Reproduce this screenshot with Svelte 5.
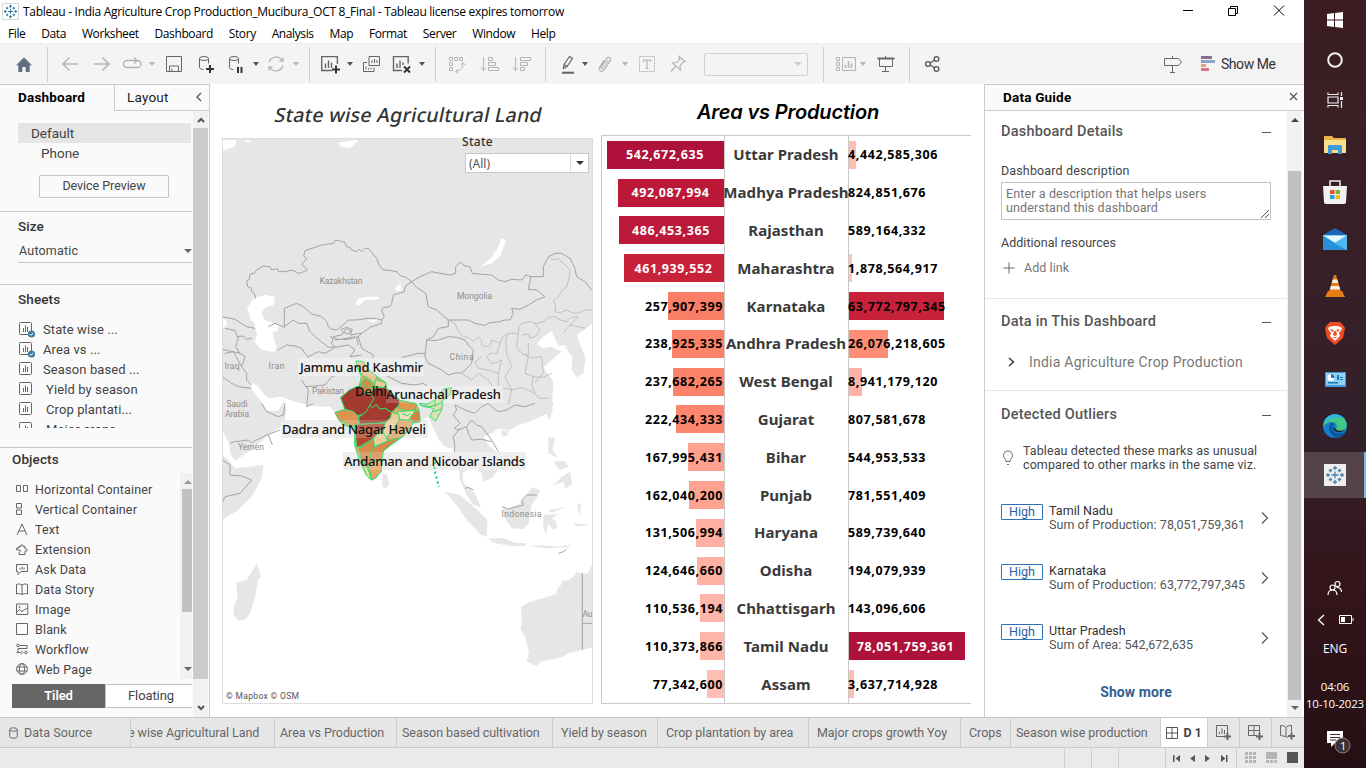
<script>
  const menus = ['File', 'Data', 'Worksheet', 'Dashboard', 'Story', 'Analysis', 'Map', 'Format', 'Server', 'Window', 'Help'];

  const db = '<path d="M3.5 4.5v9c0 1.2 2 2 4 2M12.500 4.500v5"/><ellipse cx="8" cy="4.500" rx="4.500" ry="2"/>';
  const icons = {
    home: '<path fill="#5f6f80" stroke="none" d="M10 3.500 18 11.200h-2.300V18h-4v-5H8.300v5h-4v-6.800H2z"/>',
    back: '<path stroke="#b4b4b4" stroke-width="1.500" d="M18 10H3M9.500 3.500 3 10l6.500 6.500"/>',
    forward: '<path stroke="#b4b4b4" stroke-width="1.500" d="M2 10h15M10.500 3.500 17 10l-6.500 6.500"/>',
    replay: '<path stroke="#b4b4b4" stroke-width="1.300" d="M10 13.500H5a3.500 3.500 0 0 1 0-7h10M12 3.500l3 3-3 3M15.500 6.500a3.500 3.500 0 0 1 0 7H10"/>',
    save: '<path d="M2.500 2.500h15v15h-15zM5.500 17v-5h9v5M8 17v-2.500"/>',
    dbplus: db + '<path stroke="#333" stroke-width="2" d="M14 11v8M10 15h8"/>',
    dbpause: db + '<path stroke="#333" stroke-width="2" d="M12 13v6M15.500 13v6"/>',
    refresh: '<path stroke="#b4b4b4" stroke-width="1.300" d="M3 8.500a7.500 7.500 0 0 1 13.500-2M17 11.500a7.500 7.500 0 0 1-13.500 2M13.500 7h3.500V3.500M6.500 13H3v3.500"/>',
    newsheet: '<path stroke-width="1.400" d="M11 16.500H.7V2.600h15.700V10M4.500 14V9.500M7.500 14V6.500M10.500 14V8.500"/><path stroke="#333" stroke-width="2" d="M15 11.500v8M11 15.500h8"/>',
    duplicate: '<path d="M8 2.500h10.500v9H8zM6 8.500H2.500v9H13v-4M11 9V6.500M13.500 9V5M16 9V6M5 15.500v-3M7.500 15.500v-1.500M10 15.500v-2"/>',
    clear: '<path stroke-width="1.400" d="M10 16.500H1.500V2.600h14.700v7M5 14V9.500M8 14V6.500M11 11V8.500"/><path stroke="#333" stroke-width="2" d="m12 12.500 6 6M18 12.500l-6 6"/>',
    swap: '<path stroke="#b4b4b4" d="M2.500 3.500h3v3h-3zM7.500 3.500h3v3h-3zM12.500 3.500h3v3h-3zM2.500 8.500h3v3h-3zM2.500 13.500h3v3h-3zM16 9c0 4-2 7.500-7 8.500M13.500 11 16 8.500l2.500 2.500M11 15l-2.500 2.500L11 19.500"/>',
    asc: '<path stroke="#b4b4b4" d="M3.500 3v13M1 13.500l2.500 3 2.500-3M8.500 3.500h4v3h-4zM8.500 8.500h7v3h-7zM8.500 13.500h10v3h-10z"/>',
    desc: '<path stroke="#b4b4b4" d="M3.500 3v13M1 13.500l2.500 3 2.500-3M8.500 3.500h10v3h-10zM8.500 8.500h7v3h-7zM8.500 13.500h4v3h-4z"/>',
    pen: '<path stroke-width="1.200" d="m6 10.500 5.500-8 3 2-5.500 8-3.500 2zM6 10.500l3 2"/><path stroke-width="2" d="M4 18.700h12"/>',
    clip: '<path stroke="#b4b4b4" stroke-width="1.200" d="m13.500 6-5.500 8c-1 1.300-2.600.2-1.800-1.200l5.600-8.400c1.600-2.300 5-.4 3.500 2.200l-6 9c-2.500 3.500-6.700 1-4.600-2.500l4.500-7"/>',
    text: '<path stroke="#b4b4b4" stroke-dasharray="2 1" d="M2.500 2.500h15v15h-15z"/><path stroke="#b4b4b4" stroke-width="1.200" d="M6.500 8V6h7v2M10 6v8.500M8.500 14.500h3"/>',
    pin: '<path stroke="#b4b4b4" stroke-width="1.200" d="m11 2.500 6 5-2 .5-3 4 .5 4-8-7 4.500-.5 2.500-3.500zM8 12l-5 5.500"/>',
    cards: '<path stroke="#b4b4b4" d="M.5 3.500h3v3h-3zM.5 8.500h3v3h-3zM.5 13.500h3v3h-3zM6.500 3.500h13v13h-13z"/><path stroke="#b4b4b4" stroke-width="1.600" d="M9.500 14v-3M12.500 14V7M15.500 14V9.500"/>',
    present: '<path d="M9.500 2v2M3.500 5v7.500h13V5M9.500 12.500v5M6 17.500h7"/><path stroke-width="2" d="M1.500 4.500h17"/>',
    share: '<g stroke="#555" stroke-width="1.300"><circle cx="6" cy="10" r="2.400"/><circle cx="14.500" cy="5" r="2.400"/><circle cx="14.500" cy="15" r="2.400"/><path d="m8 9 4.500-2.800M8 11l4.500 2.800"/></g>',
    sign: '<path d="M1.500 4.500h14l3 3.500-3 3.500h-14zM9.500 2v2.500M9.500 11.500v7M7 18.500h5"/>'
  };

  const tools = [
    ['home', 14], ['sep', 13], ['back', 12], ['forward', 12], ['replay', 10], ['caret-off', 6], ['save', 8], ['dbplus', 12],
    ['dbpause', 10], ['caret', 6], ['refresh', 6], ['caret-off', 6], ['sep', 9], ['newsheet', 11], ['caret', 5], ['duplicate', 7],
    ['clear', 11], ['caret', 6], ['sep', 9], ['swap', 11], ['asc', 13], ['desc', 12], ['sep', 13], ['pen', 12], ['caret', 3],
    ['clip', 6], ['caret-off', 6], ['text', 8], ['pin', 11], ['select', 16], ['sep', 15], ['cards', 12], ['caret-off', 3],
    ['present', 9], ['sep', 13], ['share', 12]
  ];

  const sheets = [
    ['State wise ...', true, false], ['Area vs ...', true, false], ['Season based ...', false, false],
    ['Yield by season', false, true], ['Crop plantati...', false, true], ['Major crops ...', false, true]
  ];

  const objects = [
    ['Horizontal Container', '<path d="M.5 2.500h4v6h-4zM7.500 2.500h4v6h-4z"/>'],
    ['Vertical Container', '<path d="M.5.500h5v4.500h-5zM.5 7h5v4.500h-5z"/>'],
    ['Text', '<path d="M1 12 6 1l5 11M3 8h6"/>'],
    ['Extension', '<path d="M3 3.500h2C4 1 8 1 7 3.500h2v2.500c3-1 3 3 0 2v3.500H3V9.500C5 9 5 6.500 3 7H.7V5H3z"/>'],
    ['Ask Data', '<path d="M.5 1.500h11v7H5l-3 3v-3H.5zM4 6.500V5M6 6.500V3.500M8 6.500V4.500"/>'],
    ['Data Story', '<path d="M.5 1.500c2-1 4-.5 5.500.5 1.500-1 3.500-1.500 5.500-.5v9.500c-2-.7-4-.5-5.500.5-1.500-1-3.500-1.200-5.500-.5zM6 2v9.500"/>'],
    ['Image', '<path d="M.5 1h11.300v10.500H.5zM1 9l2.500-2.500L6 8.500 8 7l3.500-2"/><circle cx="3.500" cy="4" r=".6"/>'],
    ['Blank', '<path d="M.5.500h11v11H.5z"/>'],
    ['Workflow', '<circle cx="2" cy="2.500" r="1.300"/><circle cx="10" cy="9.500" r="1.300"/><path d="M3.500 2.500h7.500v3H2v4h3M6 5.500h3M5 7.500l2 2-2 2M.5 9.500h2"/>'],
    ['Web Page', '<circle cx="6" cy="6" r="5.400"/><ellipse cx="6" cy="6" rx="2.600" ry="5.400"/><path d="M1 4h10M1 8h10"/>']
  ];

  const rows = [
    ['Uttar Pradesh', '542,672,635', '#ae123a', '4,442,585,306', '#ffbeb2'],
    ['Madhya Pradesh', '492,087,994', '#bc183a', '824,851,676', '#ffbeb2'],
    ['Rajasthan', '486,453,365', '#bd193a', '589,164,332', '#ffbeb2'],
    ['Maharashtra', '461,939,552', '#c8213a', '1,878,564,917', '#fcc5bd'],
    ['Karnataka', '257,907,399', '#fa7d66', '63,772,797,345', '#c8213a'],
    ['Andhra Pradesh', '238,925,335', '#fc826a', '26,076,218,605', '#fe8c76'],
    ['West Bengal', '237,682,265', '#fc826a', '8,941,179,120', '#ffb2a5'],
    ['Gujarat', '222,434,333', '#fd866e', '807,581,678', '#ffbeb2'],
    ['Bihar', '167,995,431', '#ffa18f', '544,953,533', '#ffbeb2'],
    ['Punjab', '162,040,200', '#ffa391', '781,551,409', '#ffbeb2'],
    ['Haryana', '131,506,994', '#ffb0a2', '589,739,640', '#ffbeb2'],
    ['Odisha', '124,646,660', '#ffb2a4', '194,079,939', '#ffbeb2'],
    ['Chhattisgarh', '110,536,194', '#ffb5a8', '143,096,606', '#ffbeb2'],
    ['Tamil Nadu', '110,373,866', '#ffb5a8', '78,051,759,361', '#ae123a'],
    ['Assam', '77,342,600', '#ffbeb2', '3,637,714,928', '#ffbeb2']
  ].map(([state, area, areaColor, prod, prodColor]) => {
    const a = +area.replaceAll(',', '');
    const p = +prod.replaceAll(',', '');
    return {
      state, area, areaColor, prod, prodColor,
      areaW: Math.round((a / 542672635) * 117),
      prodW: p < 1e9 ? 0 : Math.round((p / 78051759361) * 116),
      areaIn: a > 4e8, prodIn: p > 7e10
    };
  });

  const outliers = [
    ['Tamil Nadu', 'Sum of Production: 78,051,759,361'],
    ['Karnataka', 'Sum of Production: 63,772,797,345'],
    ['Uttar Pradesh', 'Sum of Area: 542,672,635']
  ];

  const tabs = [
    ['e wise Agricultural Land', 144, 0], ['Area vs Production', 122, 5], ['Season based cultivation', 156, 5], ['Yield by season', 105, 8],
    ['Crop plantation by area', 151, 8], ['Major crops growth Yoy', 152, 8], ['Crops', 50, 8], ['Season wise production', 150, 5]
  ];

  const land = [
    'M22 144H1133V700L1105 722 1085 735 1098 770 1112 805 1105 850 1085 862 1070 840 1072 800 1060 785 1050 765 1030 768 1010 722 985 740 965 762 985 775 1005 770 1040 785 1010 810 985 832 1015 875 1012 930 1015 945 1000 970 950 992 910 1005 880 1022 850 1015 830 1030 805 1040 820 1065 850 1090 858 1130 830 1165 805 1175 800 1150 780 1135 760 1140 742 1150 745 1180 780 1210 798 1252 775 1245 755 1215 735 1170 730 1120 715 1075 705 1075 690 1070 672 1050 650 1005 640 980 620 990 600 1000 560 1040 520 1065 500 1090 500 1140 470 1168 450 1130 430 1080 415 1020 400 1010 370 1000 360 970 345 950 290 948 240 935 200 920 165 925 150 915 125 885 105 878 112 900 135 930 145 945 155 962 190 962 205 935 215 960 208 1000 190 1015 160 1035 110 1080 60 1112 46 1090 42 1060 22 1020Z',
    'M22 1095 40 1110 60 1135 146 1125 140 1165 110 1220 70 1260 22 1290Z',
    'M125 1420 138 1460 130 1468 120 1520 105 1570 92 1588 70 1592 55 1575 58 1545 67 1525 64 1478 95 1470Z',
    'M1133 1422 1116 1452 1085 1446 1080 1455 1062 1470 1040 1472 1040 1482 1025 1500 1025 1510 1000 1520 945 1535 918 1550 920 1600 916 1615 930 1640 942 1685 935 1715 965 1728 975 1715 1040 1702 1060 1690 1133 1672Z',
    'M690 1205 735 1215 790 1262 817 1290 815 1340 795 1332 755 1290 725 1245Z',
    'M820 1345 865 1345 900 1358 935 1360 930 1368 885 1368 835 1358Z',
    'M862 1250 880 1258 915 1240 935 1215 950 1192 975 1200 968 1220 950 1245 942 1300 925 1318 890 1315 870 1285Z',
    'M985 1275 1030 1272 1010 1285 1020 1292 1028 1310 1015 1320 1000 1300 993 1335 985 1310Z',
    'M1000 1040 1020 1045 1012 1080 1030 1105 1000 1090Z', 'M1015 1115 1050 1112 1060 1130 1035 1140Z', 'M1040 1160 1065 1145 1072 1180 1052 1196 1045 1175 1015 1185Z',
    'M503 1152 515 1152 523 1180 515 1194 502 1190Z', 'M857 1023 880 1022 876 1037 862 1040Z', 'M1003 952 1014 957 1004 992 995 972Z',
    'M940 1368 985 1366 1030 1370 1070 1364 1060 1372 1000 1375Z', 'M1000 1260 1055 1250 1010 1268Z', 'M1085 1245 1100 1240 1094 1275ZM1075 1300 1125 1305 1085 1310Z'
  ];
  const water = [
    'M118 625 150 614 180 620 176 645 152 652 140 668 148 690 165 696 192 705 188 722 174 728 176 745 186 772 178 786 140 780 118 755 126 735 118 700 108 690 96 655 108 635Z',
    'M22 683 34 692 36 706 22 712ZM22 150 65 150 60 170 22 182ZM370 158 420 150 430 152 405 175 375 170ZM860 444 873 450 858 495 830 520 795 530 825 508 845 480Z',
    'M422 643 428 626 460 620 493 620 490 628 450 629 432 648ZM540 595 556 580 560 602 545 603ZM452 692 490 688 478 698ZM85 150 108 152 100 158Z'
  ];
  const borders = [
    'M122 626 118 610 110 605 108 593 98 590 95 572 103 568 105 552 118 550 125 540 145 528 165 530 168 540 188 536 190 545 210 545 225 541 240 543 247 550 260 548 277 540 260 522 268 515 275 505 266 498 270 482 300 472 320 465 355 460 358 453 372 450 378 456 388 455 395 470 405 472 410 480 425 485 432 478 440 485 450 475 460 475 485 505 492 525 505 540 525 541 545 545 560 560 570 560 590 575 570 590 568 605 545 612 535 615 530 640 525 650 505 652 500 660 508 680 500 690 480 685 460 685 425 690 400 690 385 705 365 720 350 718 340 710 335 695 320 680 290 672 265 650 245 640 208 655 208 710 235 690 250 700 275 700 285 725 300 740 340 772 360 770 350 760 355 740 380 735 395 715 410 725 405 735 440 730 465 712 500 700 500 690',
    'M590 575 615 560 650 545 665 548 705 555 722 550 722 530 735 517 750 528 765 530 772 550 800 553 830 555 850 570 870 575 890 568 920 570 932 555 948 560 985 560 985 530 1000 500 1020 490 1040 490 1065 505 1078 530 1085 560 1110 575 1130 600',
    'M590 575 605 592 632 610 640 650 665 660 700 690 730 690 760 690 780 700 808 706 825 698 855 695 870 690 885 690 895 670 890 655 915 658 940 645 965 630 990 620 965 600 940 598 948 560',
    'M22 680 60 688 95 710 120 715M30 715 60 722 70 745 62 770 75 790 22 778M75 790 90 800 80 830 95 850 95 870 110 885M22 860 50 880 70 890 108 895M65 740 85 738 95 748 110 745M190 780 215 765 240 768 260 775 270 790 280 800 270 815 260 830M280 800 310 785 330 790 360 772 400 765 420 780 405 800 440 795M260 870 280 900 275 950 295 940M270 890 300 888 330 885 350 860 380 850 400 830M345 740 370 748 400 748 430 740 440 775 475 795 470 820 500 850 530 865 560 880 600 885 625 880',
    'M440 730 425 745 430 765M160 710 180 700 208 712M375 720 395 712 412 718 400 732 380 725M358 750 380 748 420 740M45 1060 60 1055 100 1050 110 1058 125 1050 155 1035 195 1020M160 1035 172 1065M140 940 155 965 190 980 205 975 210 940M22 1110 45 1125 45 1155 80 1158 110 1170 75 1210 30 1220 22 1240M1102 1450V1680M1102 1600H1133M30 790 55 785 80 830',
    'M635 750 665 752 700 740 725 742 750 750 760 765 775 780 770 820 740 850 725 848 700 855 680 840 660 830 640 820 630 800 635 750 655 740 670 715 700 710 700 690M630 790 610 790 590 795 560 802',
    'M625 880 645 895 660 895 690 905 700 918 720 930 760 930 750 905M720 945 750 960 780 970 800 950 820 940 835 955 850 965 875 960 900 945 930 950 960 940M720 945 725 960 715 975 735 1000 718 1015 730 1020 755 1010 770 990 785 1005 800 1010 815 1030 830 1050 850 1085M715 1100 720 1070 715 1040 735 1015M755 1010 760 1030 770 1050 800 1048 830 1055M862 1250 880 1257 925 1245 920 1230 935 1215 965 1215M750 1195 760 1192 775 1200M1030 1390 1045 1385 1055 1378'
  ];
  const provinces = [
    'M700 690 720 700 728 720 745 740 760 742 775 755 790 740 800 752 800 765 810 770 825 768 830 750 855 760 862 742 880 730 910 730 912 712 920 700 945 695 965 700 985 695 1000 682 1020 680 1035 690 1055 695 1070 682 1090 680M1000 500 1015 510 1030 505 1045 520 1065 540 1062 565 1055 590 1040 605 1030 620 1015 630 1022 648 1020 665 1035 668 1055 660 1070 668 1090 670 1110 660 1130 660M855 760 845 790 825 790 815 800 830 820 845 818 860 810 850 850 820 840M880 730 872 750 875 790 890 830 870 860 890 900 880 945M910 730 905 770 920 790 940 800 930 850 955 860 950 885 960 910M920 735 940 732 945 745 960 740 975 720 960 700M930 790 950 805 980 800 985 850 970 865 960 880M740 850 770 870 790 850 820 870 840 900 820 912 800 910M820 840 790 835 780 815 800 800M955 860 985 862 1010 850M890 900 920 892 950 905 975 925 1000 925M850 850 850 890 890 900M940 760 940 795M1090 680 1060 710 1045 730M1065 705 1110 715'
  ];

  const outline = 'M108 48 130 50 150 78 172 95 197 113 200 128 232 158 240 166 288 176 298 198 300 230 280 234 260 262 248 275 215 298 190 318 186 345 184 378 166 400 155 405 140 392 118 345 104 300 104 245 88 246 70 240 45 203 75 193 62 158 88 135 118 122 124 95 112 68Z';
  const regions = [
    ['M62 158 88 135 118 122 130 142 148 146 163 160 164 178 140 198 130 208 112 212 100 200 75 193Z', '#a33a30'],
    ['M148 146 165 128 195 127 240 166 236 182 215 202 196 190 180 192 168 178 158 188 150 180 163 160Z', '#9d342e'],
    ['M116 215 130 208 140 198 150 180 158 188 168 178 180 192 196 190 215 203 212 218 196 232 160 236 118 238Z', '#a43c31'],
    ['M45 203 75 193 100 200 116 215 112 240 88 246 80 232 60 230Z', '#de934f'],
    ['M104 243 118 238 160 236 196 234 196 250 175 262 160 280 120 305 110 306Z', '#b4482f'],
    ['M108 48 130 50 150 78 172 95 165 117 145 100 128 92 112 65Z', '#ecc391'],
    ['M165 103 197 113 196 128 165 124Z', '#efc999'], ['M120 120 134 100 150 108 165 128 148 146 130 142Z', '#d08d4f'],
    ['M240 166 288 176 286 194 262 198 236 190Z', '#e19650'], ['M232 200 262 198 287 196 272 216 265 226 240 224Z', '#eee0b8'],
    ['M272 216 287 196 298 200 300 230 280 234Z', '#d28448'], ['M215 203 236 206 238 224 222 250 198 278 190 262 196 234 212 218Z', '#efcc94'],
    ['M238 224 265 226 280 232 260 262 248 275 215 290 200 280 222 250Z', '#e3a260'], ['M160 282 178 264 190 264 204 288 163 306Z', '#efcf98'],
    ['M163 306 204 288 248 275 215 298 190 318 186 344 158 350 150 330Z', '#d88b4b'], ['M118 310 160 282 163 306 150 330 158 350 145 362 124 350Z', '#d88b4b'],
    ['M124 350 145 375 155 405 140 392Z', '#efdc9c'], ['M145 362 158 350 186 344 184 378 166 400 155 404Z', '#e5a766'],
    ['M298 174 320 178 345 165 370 132 395 128 390 150 368 165 365 195 347 228 330 215 342 190 308 184Z', '#dce0b0']
  ];

  const places = [
    ['Kazakhstan', 341, 284, 43], ['Mongolia', 474.5, 299, 35], ['China', 461.500, 360, 24], ['Iraq', 232, 369, 15], ['Iran', 276.5, 369, 16], ['Pakistan', 328, 394, 32],
    ['Saudi', 237, 407, 21], ['Arabia', 237, 417, 24], ['Yemen', 251, 450, 26], ['Indonesia', 521.5, 517, 40], ['Au', 587.5, 617, 10]
  ];
  const plates = [[298, 358, 126, 18], [386, 386, 117, 17], [281, 420, 147, 18], [343, 452, 183, 18]];
  const marks = [
    ['Jammu and Kashmir', 300, 372, 123], ['Delhi', 355, 396, 32], ['Arunachal Pradesh', 386, 399, 115],
    ['Dadra and Nagar Haveli', 282, 434, 144], ['Andaman and Nicobar Islands', 344, 466, 181]
  ];
</script>

{#snippet logo(size, color)}
  <svg width={size} height={size} viewBox="0 0 20 20" fill="none" stroke={color} stroke-width="1.300">
    <path d="M10 6.500v7M6.500 10h7M10 1v4M8 3h4M10 15v4M8 17h4M3 8v4M1 10h4M17 8v4M15 10h4M5.500 3.800v3.400M3.800 5.500h3.400M14.500 3.800v3.400M12.800 5.500h3.400M5.500 12.800v3.400M3.800 14.500h3.400M14.500 12.800v3.400M12.800 14.500h3.400" />
  </svg>
{/snippet}

{#snippet sheetIcon(done)}
  <svg width="17" height="17" viewBox="0 0 17 17" fill="none" stroke="#666">
    <rect x=".5" y="1.500" width="12" height="12" rx="1" /><path d="M4.500 11V7M6.500 11V4.500M8.500 11V6" />
    {#if done}<circle cx="12.500" cy="13" r="3.600" fill="#3a7f9e" stroke="none" /><path stroke="#fff" d="m10.800 13 1.300 1.300 2.200-2.400" />{/if}
  </svg>
{/snippet}

<div class="screen">
  <main class="window">
    <header class="title">
      <span class="app-logo">{@render logo(15, '#2f7296')}</span>
      <span class="caption">Tableau - India Agriculture Crop Production_Mucibura_OCT 8_Final - Tableau license expires tomorrow</span>
      <svg class="winctl" width="104" height="14" viewBox="0 0 104 14" fill="none" stroke="#000">
        <path d="M1 6.500h10M46.500 4.500h7v7h-7zM48.500 4V2.500h7v7H54M92 1.500l10 10M102 1.500l-10 10" />
      </svg>
    </header>
    <nav class="menu">{#each menus as m}<span>{m}</span>{/each}</nav>

    <div class="toolbar">
      {#each tools as [name, gap]}
        <span class="tool {name}" style:margin-left="{gap}px">
          {#if icons[name]}<svg width="20" height="20" viewBox="0 0 20 20" fill="none" stroke="#666">{@html icons[name]}</svg>{/if}
        </span>
      {/each}
      <div class="showme">
        <svg width="20" height="20" viewBox="0 0 20 20" fill="none" stroke="#666">{@html icons.sign}</svg>
        <svg class="bars" width="14" height="16"><path fill="#86708f" d="M0 0h11v3H0z" /><path fill="#8aa5c4" d="M0 4h14v3H0z" /><path fill="#eba07c" d="M0 8h5v3H0z" /><path fill="#e2707d" d="M0 12h8v3H0z" /></svg>
        <span>Show Me</span>
      </div>
    </div>

    <div class="body">
      <aside class="left">
        <div class="ltabs"><b>Dashboard</b><div class="layout"><span>Layout</span><svg width="6" height="10" fill="none" stroke="#555" stroke-width="1.300"><path d="M5 1 1 5l4 4" /></svg></div></div>
        <div class="lwrap">
          <div class="lcontent">
            <section class="device">
              <div class="default">Default</div>
              <div class="phone">Phone</div>
              <div class="preview">Device Preview</div>
            </section>
            <section class="size"><h4>Size</h4><div class="auto"><span>Automatic</span><i class="tri"></i></div></section>
            <section class="sheets"><h4>Sheets</h4>
              <div class="slist">{#each sheets as [name, done, pad]}<div class="srow" class:pad>{@render sheetIcon(done)}<span>{name}</span></div>{/each}</div>
            </section>
            <section class="objects"><h4>Objects</h4>
              <div class="obox">
                <div class="olist">{#each objects as [name, art]}<div class="orow"><svg width="13" height="13" viewBox="0 0 13 13" fill="none" stroke="#666">{@html art}</svg><span>{name}</span></div>{/each}</div>
                <div class="oscroll"><i class="up"></i><div></div><i class="tri"></i></div>
              </div>
              <div class="mode"><b>Tiled</b><span>Floating</span></div>
            </section>
          </div>
          <div class="lscroll"><svg width="8" height="6" fill="none" stroke="#555" stroke-width="2"><path d="M1 5l3-3 3 3" /></svg><div></div><svg width="8" height="6" fill="none" stroke="#555" stroke-width="2"><path d="M1 1l3 3 3-3" /></svg></div>
        </div>
      </aside>

      <section class="mapcard">
        <h2><span>State wise Agricultural Land</span></h2>
        <div class="map">
          <svg width="369" height="564" viewBox="223 139 369 564">
            <g transform="translate(215 90) scale(.33333)">
              {#each land as d}<path {d} fill="#e6e6e6" />{/each}
              {#each water as d}<path {d} fill="#fff" />{/each}
              <g fill="none" stroke-linejoin="round"><g stroke="#a3a3a3" stroke-width="3">{#each borders as d}<path {d} />{/each}</g>
                <g stroke="#b8b8b8" stroke-width="2.500">{#each provinces as d}<path {d} />{/each}</g></g>
            </g>
            <g class="places">{#each places as [t, x, y, w]}<text {x} {y} textLength={w}>{t}</text>{/each}</g>
            {#each plates as [x, y, width, height]}<rect {x} {y} {width} {height} fill="#eee" />{/each}
            <g transform="translate(320 345) scale(.33333)" stroke="#2fdc6e" stroke-width="3" stroke-linejoin="round">
              <path d={outline} fill="#e3a862" />
              {#each regions as [d, c]}<path {d} fill={c} />{/each}
              <path fill="none" d="M300 180 325 185 350 180 370 168M345 165 345 185M340 200 365 192M130 120 150 128 165 128M245 206 262 212 272 206" />
              <path fill="none" stroke="#14d98a" stroke-dasharray="7 8" stroke-width="6" d="M346 335 343 375 357 425" />
            </g>
            {#each plates as [x, y, width, height]}<rect {x} {y} {width} {height} fill="#eee" fill-opacity=".2" />{/each}
            {#each marks as [t, x, y, w]}<text class="mark" {x} {y} textLength={w}>{t}</text>{/each}
            <text class="credit" x="226" y="699" textLength="73">© Mapbox © OSM</text>
          </svg>
          <div class="filter"><span>State</span><div class="combo"><span>(All)</span><i><em class="tri dark"></em></i></div></div>
        </div>
      </section>

      <section class="chartcard">
        <h2>Area vs Production</h2>
        <div class="chart">
          {#each rows as r}
            <div class="row">
              <div class="area" class:inside={r.areaIn}><div class="bar" style:width="{r.areaW}px" style:background={r.areaColor}><span>{r.area}</span></div></div>
              <div class="state">{r.state}</div>
              <div class="prod" class:inside={r.prodIn}><div class="bar" style:width="{r.prodW}px" style:background={r.prodColor}><span>{r.prod}</span></div></div>
            </div>
          {/each}
        </div>
      </section>

      <aside class="guide">
        <div class="ghead"><b>Data Guide</b><svg width="9" height="9" fill="none" stroke="#555" stroke-width="1.200"><path d="m1 1 7 7M8 1 1 8" /></svg></div>
        <div class="gwrap">
          <div class="gbody">
            <section class="details">
              <h3>Dashboard Details<i></i></h3>
              <div class="lab">Dashboard description</div>
              <div class="area-input">Enter a description that helps users<br />understand this dashboard<svg width="9" height="9" fill="none" stroke="#555"><path d="M1 9l8-8M5 9l4-4" /></svg></div>
              <div class="lab res">Additional resources</div>
              <div class="add"><svg width="12" height="12" stroke="#666" fill="none"><path d="M6 .5v11M.5 6h11" /></svg><span>Add link</span></div>
            </section>
            <section class="source">
              <h3>Data in This Dashboard<i></i></h3>
              <div class="ds"><svg width="7" height="10" fill="none" stroke="#333" stroke-width="1.400"><path d="m1 1 4.500 4L1 9" /></svg><span>India Agriculture Crop Production</span></div>
            </section>
            <section class="outliers">
              <h3>Detected Outliers<i></i></h3>
              <div class="tip"><svg width="12" height="16" fill="none" stroke="#666"><path d="M4 11.500C4 9 1.500 8.500 1.500 5.500a4.500 4.500 0 0 1 9 0c0 3-2.500 3.500-2.500 6zM5 14.500h2" /></svg><p>Tableau detected these marks as unusual<br />compared to other marks in the same viz.</p></div>
              {#each outliers as [n, d]}
                <div class="out"><span class="high">High</span><div><div class="n">{n}</div><div class="d">{d}</div></div><svg width="8" height="14" fill="none" stroke="#555" stroke-width="1.200"><path d="m1 1.500 5.500 5.500L1 12.500" /></svg></div>
              {/each}
              <b class="more">Show more</b>
            </section>
          </div>
          <div class="gscroll"><i class="up dark"></i><div></div><i class="tri"></i></div>
        </div>
      </aside>
    </div>

    <div class="tabs">
      <div class="src"><svg width="9" height="12" fill="none" stroke="#666"><ellipse cx="4.500" cy="2.500" rx="3.800" ry="1.700" /><path d="M.7 2.500v7c0 2.300 7.600 2.300 7.600 0v-7" /></svg><span>Data Source</span></div>
      {#each tabs as [t, w, p]}<div class="tab" class:cut={p === 0} style:width="{w}px" style:padding-left="{p}px"><span>{t}</span></div>{/each}
      <div class="tab active"><svg width="12" height="12" fill="none" stroke="#555"><path d="M.5.500h11v11H.5zM6 .5v11M.5 6h11" /></svg><b>D 1</b></div>
      <div class="tab new"><svg width="16" height="16" fill="none" stroke="#666"><path d="M9 11.500H.5V.5h11V8M3.500 9V7M6 9V3.500M8.500 9V5" /><path stroke-width="2" d="M11.500 8v7M8 11.500h7" /></svg></div>
      <div class="tab new"><svg width="16" height="16" fill="none" stroke="#666"><path d="M9 10.500H.5V.5h11V8M6 .5v10M.5 5.500h11" /><path stroke-width="2" d="M11.500 8v7M8 11.500h7" /></svg></div>
      <div class="tab new"><svg width="16" height="16" fill="none" stroke="#666"><path d="M8 12.500 6 11.500.5 10.500V.5C3 .5 5 1 6 2.500 7 1 9 .5 11.500.5V7M6 2.500v9" /><path stroke-width="2" d="M11.500 7.500v7M8 11h7" /></svg></div>
    </div>
    <footer class="status">
      <span></span><span></span><span></span>
      <div class="pager"><svg width="56" height="9" fill="#555"><path d="M0 1h1.500v7H0zM7 1v7L2.500 4.500zM22 1v7l-5-3.500zM32 1v7l5-3.500zM48 1v7l4.500-3.500zM53 1h1.500v7H53z" /></svg></div>
      <svg class="views" width="54" height="12"><path fill="#b5b5b5" d="M0 0h3v3H0zM4 0h3v3H4zM8 0h3v3H8zM0 4h3v3H0zM4 4h3v3H4zM8 4h3v3H8zM0 8h3v3H0zM4 8h3v3H4zM8 8h3v3H8zM21 0h11v7H21zM21 8h3v3h-3zM25 8h3v3h-3zM29 8h3v3h-3z" /><path fill="#555" d="M42 0h11v11H42z" /></svg>
    </footer>
  </main>

  <aside class="taskbar">
    <div class="tb"><svg width="16" height="16" fill="#fff"><path d="M0 2l7-1v6.500H0zM8 .9 16 0v7.500H8zM0 8.500h7V15l-7-1zM8 8.500h8V16l-8-1z" /></svg></div>
    <div class="tb"><svg width="16" height="16" fill="none" stroke="#eee" stroke-width="2"><circle cx="8" cy="8" r="6.800" /></svg></div>
    <div class="tb"><svg width="17" height="16" fill="none" stroke="#eee" stroke-width="1.200"><path d="M1 .5v2h10v-2M1 15.500v-2h10v2M1 5h10v6H1zM14.500 0v4M14.500 9v7" /><path stroke-width="3" d="M13 6.500h3" /></svg></div>
    <div class="tb"><svg width="22" height="18"><path fill="#e9b548" d="M0 0h8l2 2h12v12H0z" /><path fill="#fbe08a" d="M0 4h22v13H0z" /><path fill="#3f9bd8" d="M4 10q0-1 1-1h12q1 0 1 1v8h-4v-4H8v4H4z" /></svg></div>
    <div class="tb"><svg width="24" height="24"><path fill="none" stroke="#eee" stroke-width="1.500" d="M7 6V1h10v5" /><path fill="#f2f2f2" d="M0 6h24l-1 16q0 2-2 2H3q-2 0-2-2z" /><path fill="#e8502c" d="M7 10h4.500v4H7z" /><path fill="#7db52c" d="M12.500 10H17v4h-4.500z" /><path fill="#24a0e0" d="M7 15h4.500v4H7z" /><path fill="#f7b616" d="M12.500 15H17v4h-4.500z" /></svg></div>
    <div class="tb"><svg width="24" height="22"><path fill="#1765b5" d="M0 7 12 0l12 7v4H0z" /><path fill="#7fd3f7" d="M0 7h24v15H0z" /><path fill="#e7f6ff" d="M2 8h20L12 15z" /><path fill="#2791dc" d="M0 8l24 14H0z" /><path fill="#4cb9f0" d="M24 8v14L11 15z" /></svg></div>
    <div class="tb"><svg width="20" height="24"><path fill="#e67c12" d="M3 17h14l3 6H0zM9 1h2l5 17H4z" /><path fill="#f3eee8" d="M7.700 5.500h4.600l1 3.500H6.700zM5.800 12h8.400l1 3.500H4.800z" /></svg></div>
    <div class="tb"><svg width="20" height="24"><path fill="#f04b23" d="M5 1h10l3 3 2 3-2 10-8 7-8-7L0 7l2-3z" /><path fill="#fff" d="m4 6 4-1h4l4 1 1 2-3 4 1 3-5 5-5-5 1-3-3-4z" /><path fill="#f04b23" d="m5 8 4 1-2 2zM15 8l-4 1 2 2zM9 10h2l1 4-2 1-2-1zM7 16h6l-3 1z" /></svg></div>
    <div class="tb"><svg width="21" height="15"><path fill="#3e9bd9" d="M0 0h21v15H0z" /><path fill="#8fd0f5" d="M1 1h19v12H1z" /><circle cx="6" cy="5.500" r="3.500" fill="#fff" /><path fill="#1976b8" d="M6 2v4h3.500A3.500 3.500 0 0 0 6 2zM12 3h2v5h-2zM15 5h3v1h-3zM15 7h3v1h-3zM3 10h10v1.500H3z" /></svg></div>
    <div class="tb"><svg width="24" height="24"><circle cx="12" cy="12" r="12" fill="#137fcf" /><path fill="#43c881" d="M1 8C5-2 20-2 23.500 9c1 5-2 8-6 8-3 0-5-1-4-3 1-3-1-6-5-6C5 8 2 10 0 13z" /><path fill="#2db9df" d="M1 8C5-2 18-1 22 6 16 2 8 3 3 8z" /><path fill="#0d5499" d="M8 9c-4 5-1 12 5 15 4 0 7-2 9-6-6 3-13 1-13-4 0-2 0-3 3-4-1-1-2-1-4-1z" /><path fill="#2c2028" d="M11 12c0 4 5 6 11 4-3 3-10 3-12-1z" /></svg></div>
    <div class="tb on"><span>{@render logo(20, '#4b83a8')}</span></div>
    <div class="people"><svg width="16" height="16" fill="none" stroke="#fff" stroke-width="1.200"><circle cx="10.500" cy="4" r="2.500" /><circle cx="5.500" cy="7.500" r="2.500" /><path d="M1 15q0-5 4.500-5t4.500 5M9.500 7.500q5 0 5 4.500" /></svg></div>
    <div class="tray"><svg width="8" height="12" fill="none" stroke="#fff" stroke-width="1.300"><path d="M7 1 1.500 6 7 11" /></svg><svg width="16" height="9" fill="none" stroke="#fff"><path d="M.5.500h12v8H.5zM14 3v3" /><path fill="#fff" stroke="none" d="M2 2h4v5H2z" /></svg></div>
    <div class="eng">ENG</div>
    <div class="clock"><span>04:06</span><span>10-10-2023</span></div>
    <div class="note"><svg width="24" height="24"><path fill="#fff" d="M0 1h16v12H8l-4 4v-4H0z" /><path stroke="#42272c" d="M3 4.500h10M3 7.500h10M3 10h6" /><circle cx="15.500" cy="15.500" r="7.500" fill="#3a3435" stroke="#8b8586" /><text x="13" y="19.500" fill="#fff" font-size="11">1</text></svg></div>
  </aside>
</div>

<style>
  :global(body) { margin: 0; overflow: hidden; }
  .screen { width: 1366px; height: 768px; display: grid; grid-template-columns: 1304px 62px; overflow: hidden; background: #fff; color: #444; font: 12.500px Roboto, sans-serif; letter-spacing: .2px; }
  .screen * { box-sizing: border-box; }
  svg { display: block; flex: none; }
  h2, h3, h4, p { margin: 0; }
  .window { display: grid; grid-template-rows: 23px 20px 41px 633px 31px 20px; min-width: 0; }
  .title { display: flex; align-items: center; padding-left: 2px; color: #000; font-family: "Open Sans", sans-serif; font-size: 12px; letter-spacing: -.29px; white-space: nowrap; }
  .app-logo { width: 17px; height: 17px; border: 1px solid #d8d8d8; display: grid; place-items: center; }
  .caption { margin-left: 4px; }
  .winctl { margin-left: auto; margin-right: 18px; margin-bottom: 2px; }
  .menu { display: flex; align-items: center; gap: 15.900px; padding-left: 8px; color: #000; font-family: "Open Sans", sans-serif; font-size: 12px; letter-spacing: -.4px; }
  .toolbar { display: flex; align-items: center; background: #f4f4f4; border-top: 1px solid #ececec; }
  .tool { flex: none; width: 20px; }
  .tool.sep { width: 1px; height: 35px; background: #cfcfcf; }
  .tool.caret, .tool.caret-off { width: 8px; display: grid; place-items: center; }
  .tool.caret::after, .tool.caret-off::after, .tool.select::after { content: ""; border: 3px solid transparent; border-top: 4px solid #555; border-bottom: 0; }
  .tool.caret-off::after { border-top-color: #b4b4b4; }
  .tool.select { width: 104px; height: 23px; border: 1px solid #d0d0d0; border-radius: 2px; display: flex; align-items: center; justify-content: flex-end; padding-right: 5px; }
  .tool.select::after { border-width: 4px 4px 0; border-top-color: #ccc; }
  .showme { margin-left: auto; display: flex; align-items: center; width: 141px; font-size: 14px; color: #333; padding-bottom: 1px; }
  .showme .bars { margin: 0 6px 0 18px; }
  .showme span { letter-spacing: -.45px; }

  .body { display: grid; grid-template-columns: 210px 386px 388px 320px; min-height: 0; }
  .tri { border: 4px solid transparent; border-top: 4px solid #666; border-bottom: 0; }
  .tri.dark { border-top-color: #333; }
  .up { border: 4px solid transparent; border-bottom: 4px solid #999; border-top: 0; }
  .up.dark { border-bottom-color: #444; }
  .left { background: #fafafa; border-right: 1px solid #ccc; border-top: 1px solid #ccc; display: flex; flex-direction: column; min-height: 0; }
  .ltabs { display: flex; height: 26px; color: #000; }
  .ltabs > b { width: 114px; padding: 4px 0 0 18px; font-size: 13.500px; letter-spacing: .2px; }
  .layout { flex: 1; display: flex; justify-content: space-between; align-items: center; padding: 0 7px 2px 12px; border-left: 1px solid #ccc; border-bottom: 1px solid #ccc; font-size: 13.500px; color: #222; }
  .lwrap { display: grid; grid-template-columns: 193px 15px; height: 606px; }
  .lscroll { display: flex; flex-direction: column; align-items: center; justify-content: space-between; background: #f1f1f1; padding: 6px 0; }
  .lscroll > div { width: 15px; height: 551px; background: #cbcbcb; margin-top: 5px; margin-bottom: auto; }
  .lcontent { overflow: hidden; width: 192px; }
  .lcontent section { border-bottom: 1px solid #c6c6c6; }
  .lcontent h4 { font-size: 13.500px; font-weight: 500; color: #333; line-height: 16px; letter-spacing: .1px; }
  .device { height: 101px; padding: 12px 0 0 18px; font-size: 13.500px; letter-spacing: 0; }
  .default { background: #e5e5e5; height: 20px; line-height: 20px; padding-left: 13px; margin-right: 1px; }
  .phone { height: 20px; line-height: 20px; padding-left: 23px; }
  .preview { margin: 12px 0 0 21px; width: 130px; height: 23px; border: 1px solid #c4c4c4; border-radius: 1px; display: grid; place-items: center; font-size: 12.500px; letter-spacing: -.05px; padding-bottom: 2px; }
  .size { height: 73px; padding: 6px 1px 0 18px; }
  .auto { display: flex; justify-content: space-between; align-items: center; height: 22px; margin-top: 7px; padding: 0 0 2px 1px; border-bottom: 1px solid #c6c6c6; font-size: 12.500px; margin-right: -1px; }
  .sheets { height: 163px; padding: 6px 0 0 18px; }
  .slist { margin-top: 12px; height: 109px; overflow: hidden; }
  .srow { display: flex; height: 20px; align-items: center; gap: 7px; font-size: 13px; padding-left: 1px; letter-spacing: .1px; }
  .srow.pad { gap: 10px; }
  .lcontent .objects { border: 0; padding: 3px 0 0 12px; }
  .obox { display: flex; justify-content: space-between; margin-top: 6px; height: 206px; }
  .olist { padding-top: 6px; }
  .orow { display: flex; height: 20px; align-items: center; gap: 6px; padding-left: 4px; font-size: 12.500px; color: #444; letter-spacing: .15px; }
  .oscroll { width: 12px; background: #f1f1f1; display: flex; flex-direction: column; align-items: flex-end; justify-content: space-between; padding: 7px 0 8px; }
  .oscroll > div { width: 10px; height: 123px; background: #c1c1c1; margin-bottom: 50px; }
  .mode { margin-top: 5px; height: 24px; display: grid; grid-template-columns: 93px 87px; place-items: stretch; text-align: center; line-height: 23px; font-size: 13px; letter-spacing: -.1px; }
  .mode b { background: #666; color: #fff; font-weight: 600; }
  .mode span { background: #fff; border: 1px solid #c4c4c4; border-right: 0; line-height: 21px; padding-left: 4px; }

  .mapcard { padding: 19px 0 0 12px; }
  h2 { font-style: italic; text-align: center; font-weight: 500; white-space: nowrap; }
  .mapcard h2 { font-family: "Noto Sans", sans-serif; font-size: 19.500px; font-style: normal; line-height: 24px; margin-bottom: 11px; width: 374px; color: #333; letter-spacing: .25px; }
  .mapcard h2 span { display: inline-block; transform: skewX(-12deg); }
  .map { position: relative; width: 371px; height: 566px; border: 1px solid #ddd; }
  .places { font: 8.500px Roboto, sans-serif; fill: #8d8d8d; text-anchor: middle; letter-spacing: 0; }
  .mark { font: 500 13px "Noto Sans", sans-serif; fill: #111; letter-spacing: 0; }
  .credit { font: 8.500px Roboto, sans-serif; fill: #555; letter-spacing: 0; }
  .filter { position: absolute; left: 239px; top: -6px; width: 127px; font: 500 12px "Noto Sans", sans-serif; color: #333; letter-spacing: .3px; }
  .combo { margin: 3px 0 0 3px; width: 124px; height: 20px; background: #fff; border: 1px solid #c8c8c8; display: flex; justify-content: space-between; align-items: center; padding-left: 3px; font-weight: 400; color: #555; letter-spacing: 0; }
  .combo i { width: 18px; height: 18px; border-left: 1px solid #ddd; display: grid; place-items: center; }

  .chartcard { padding: 17px 0 0 5px; }
  .chartcard h2 { font-family: Inter, sans-serif; font-size: 20px; font-weight: 600; line-height: 22px; margin-bottom: 12px; width: 374px; color: #000; letter-spacing: -.15px; }
  .chart { width: 370px; height: 569px; border: 1px solid #c9c9c9; border-right: 0; display: grid; grid-template-rows: repeat(15, 1fr); }
  .row { display: grid; grid-template-columns: 123px 124px 121px; align-items: center; }
  .row > div { display: flex; align-items: center; height: 100%; }
  .bar { height: 28px; display: flex; align-items: center; white-space: nowrap; font: 700 12.500px "Noto Sans", sans-serif; letter-spacing: .6px; color: #000; }
  .area { justify-content: flex-end; border-right: 1px solid #c9c9c9; }
  .area .bar { justify-content: flex-end; }
  .area .bar span { margin-right: 1px; }
  .prod .bar span { margin-left: -1px; }
  .area.inside .bar, .prod.inside .bar { color: #fff; justify-content: center; }
  .prod.inside .bar span { margin-left: -3px; }
  .row .state { justify-content: center; white-space: nowrap; font: 700 15px "Noto Sans", sans-serif; color: #3a3a3a; letter-spacing: .08px; border-right: 1px solid #c9c9c9; padding: 0 1px 1px 0; }

  .guide { border-left: 1px solid #ccc; border-top: 1px solid #ccc; min-height: 0; background: #fff; }
  .ghead { height: 26px; display: flex; justify-content: space-between; align-items: center; padding: 0 6px 2px 18px; background: #fafafa; border-bottom: 1px solid #ccc; font-size: 13.500px; color: #000; }
  .ghead b { letter-spacing: .2px; }
  .gwrap { display: grid; grid-template-columns: 302px 15px; height: 606px; }
  .gscroll { background: #f1f1f1; display: flex; flex-direction: column; align-items: center; justify-content: space-between; padding: 7px 0; }
  .gscroll > div { width: 13px; height: 529px; background: #c1c1c1; margin-top: 42px; }
  .gbody section { border-bottom: 1px solid #e6e6e6; padding: 12px 16px 0; }
  .gbody h3 { display: flex; justify-content: space-between; align-items: center; font-size: 14.500px; line-height: 18px; font-weight: 500; color: #555; letter-spacing: .22px; }
  .gbody h3 i { width: 9px; height: 1px; background: #555; }
  .gbody .details { height: 188px; }
  .lab { margin-top: 23px; line-height: 14px; letter-spacing: .14px; }
  .lab.res { margin-top: 16px; letter-spacing: .03px; }
  .area-input { position: relative; margin-top: 4px; height: 38px; width: 270px; border: 1px solid #c4c4c4; padding: 4px; line-height: 14px; color: #757575; letter-spacing: .12px; white-space: nowrap; }
  .area-input svg { position: absolute; right: 1px; bottom: 1px; }
  .add { display: flex; align-items: center; gap: 9px; margin: 10px 0 0 2px; color: #777; letter-spacing: .05px; }
  .gbody .source { height: 92px; padding-top: 14px; }
  .ds { display: flex; align-items: center; gap: 14px; margin: 22px 0 0 7px; font-size: 14px; line-height: 18px; color: #777; letter-spacing: .23px; }
  .gbody .outliers { border: 0; padding-top: 15px; }
  .tip { display: flex; align-items: center; gap: 9px; margin: 20px 0 0 1px; height: 28px; line-height: 14px; color: #444; letter-spacing: .09px; }
  .out { display: flex; align-items: flex-start; margin-top: 32px; height: 28px; line-height: 14px; letter-spacing: .05px; }
  .high { width: 42px; height: 16px; margin: 0 6px 0 0; border: 1px solid #2d70b4; border-radius: 1px; color: #2a5fa8; text-align: center; line-height: 14px; }
  .out .n { color: #333; }
  .out .d { color: #555; white-space: nowrap; }
  .out > svg { margin: 7px 2px 0 auto; }
  .more { display: block; text-align: center; color: #2f6293; font-size: 14px; margin-top: 31px; line-height: 18px; letter-spacing: .1px; }

  .tabs { display: flex; background: #e6e6e6; border-top: 1px solid #c8c8c8; border-bottom: 1px solid #c8c8c8; color: #666; font-size: 12.500px; letter-spacing: -.06px; }
  .src { width: 130px; display: flex; align-items: center; gap: 6px; padding-left: 9px; letter-spacing: .05px; }
  .tab { flex: none; display: flex; align-items: center; border-left: 1px solid #cdcdcd; white-space: nowrap; overflow: hidden; }
  .tab.cut span { margin-left: -3px; }
  .tab.active { width: 47px; background: #fff; justify-content: center; gap: 5px; color: #444; }
  .tab.new { width: 32px; justify-content: center; }
  .status { background: #eaeaea; display: flex; align-items: center; justify-content: flex-end; }
  .status > span { width: 27px; height: 20px; border-left: 1px solid #cfcfcf; }
  .pager { width: 72px; height: 20px; display: grid; place-items: center; border-left: 1px solid #cfcfcf; border-right: 1px solid #cfcfcf; margin-left: 20px; }
  .views { margin: 0 5px 0 8px; }

  .taskbar { background: linear-gradient(#3a1c22, #3a1f25 15%, #33202a 57%, #34151b 75%, #241014); color: #fff; display: flex; flex-direction: column; align-items: center; font-family: "Open Sans", sans-serif; font-size: 12px; letter-spacing: 0; }
  .tb { height: 46.800px; flex: none; width: 62px; display: grid; place-items: center; }
  .tb:nth-child(1) { height: 39px; }
  .tb:nth-child(2), .tb:nth-child(3) { height: 41px; }
  .tb:nth-child(3) { height: 40px; margin-bottom: 2px; }
  .tb.on { height: 46px; margin-top: 2px; background: #55434a; border-right: 2px solid #76b9ed; padding-left: 2px; }
  .tb.on span { background: #eee; padding: 1px; }
  .people { margin-top: 82px; }
  .tray { display: flex; gap: 14px; align-items: center; margin-top: 18px; padding-left: 1px; }
  .eng { margin-top: 14px; letter-spacing: -.2px; }
  .clock { display: flex; flex-direction: column; align-items: center; line-height: 17px; margin-top: 21px; font-size: 11.500px; letter-spacing: -.2px; white-space: nowrap; }
  .note { margin: 18px -8px 0 0; }
</style>
